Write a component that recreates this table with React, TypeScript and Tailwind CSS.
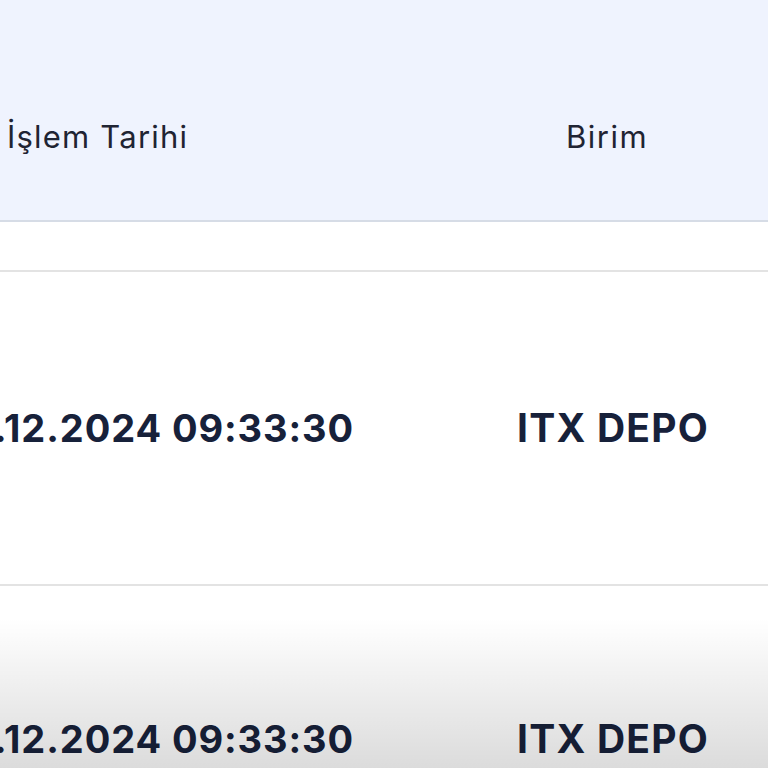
export default function App() {
  return (
    <div className="relative w-[768px] h-[768px] overflow-hidden bg-white" style={{ fontFamily: "Inter, 'Open Sans', sans-serif" }}>
      <div className="flex h-[222px] items-center bg-[#eff3fe] border-b-2 border-[#d6dce6]">
        <div className="w-[500px] pl-[7px] pt-[54px] text-[31px] text-[#1f2433] tracking-[1.2px]">İşlem Tarihi</div>
        <div className="w-[214px] text-center pt-[54px] text-[31px] text-[#1f2433] tracking-[1.5px]">Birim</div>
      </div>
      <div className="h-[50px] border-b-2 border-[#e3e3e3]" />
      <div className="flex h-[314px] items-center border-b-2 border-[#e3e3e3]">
        <div className="w-[500px] flex">
          <div className="w-[354px] flex justify-end whitespace-nowrap text-[38px] font-bold text-[#17213a] tracking-[0.9px]">17.12.2024 09:33:30</div>
        </div>
        <div className="w-[226px] text-center text-[39px] font-bold text-[#17213a] tracking-[1.2px]">ITX DEPO</div>
      </div>
      <div className="flex h-[306px] items-center">
        <div className="w-[500px] flex">
          <div className="w-[354px] flex justify-end whitespace-nowrap text-[38px] font-bold text-[#17213a] tracking-[0.9px]">17.12.2024 09:33:30</div>
        </div>
        <div className="w-[226px] text-center text-[39px] font-bold text-[#17213a] tracking-[1.2px]">ITX DEPO</div>
      </div>
      <div className="absolute left-0 right-0 bottom-0 h-[150px] bg-gradient-to-b from-transparent to-[#000]/[0.14] pointer-events-none" />
    </div>
  );
}
